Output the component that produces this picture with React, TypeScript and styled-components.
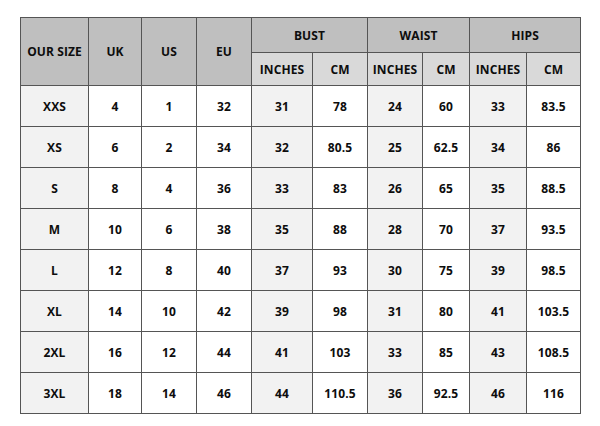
import React from 'react';
import styled, { createGlobalStyle } from 'styled-components';

const GlobalStyle = createGlobalStyle`
  html, body {
    margin: 0;
    background: #ffffff;
  }
`;

const rows: string[][] = [
  ['XXS', '4', '1', '32', '31', '78', '24', '60', '33', '83.5'],
  ['XS', '6', '2', '34', '32', '80.5', '25', '62.5', '34', '86'],
  ['S', '8', '4', '36', '33', '83', '26', '65', '35', '88.5'],
  ['M', '10', '6', '38', '35', '88', '28', '70', '37', '93.5'],
  ['L', '12', '8', '40', '37', '93', '30', '75', '39', '98.5'],
  ['XL', '14', '10', '42', '39', '98', '31', '80', '41', '103.5'],
  ['2XL', '16', '12', '44', '41', '103', '33', '85', '43', '108.5'],
  ['3XL', '18', '14', '46', '44', '110.5', '36', '92.5', '46', '116'],
];

const widths = [68, 53, 55, 55, 61, 55, 55, 47, 57, 54];
// shaded columns: size and every INCHES column
const shaded = [0, 4, 6, 8];

const App: React.FC = () => {
  return (
    <Page>
      <GlobalStyle />
      <Table>
        <colgroup>
          {widths.map((w, i) => (
            <col key={i} style={{ width: w }} />
          ))}
        </colgroup>
        <thead>
          <tr>
            <GroupHead rowSpan={2}>OUR SIZE</GroupHead>
            <GroupHead rowSpan={2}>UK</GroupHead>
            <GroupHead rowSpan={2}>US</GroupHead>
            <GroupHead rowSpan={2}>EU</GroupHead>
            <GroupHead colSpan={2} $top>BUST</GroupHead>
            <GroupHead colSpan={2} $top>WAIST</GroupHead>
            <GroupHead colSpan={2} $top>HIPS</GroupHead>
          </tr>
          <tr>
            <SubHead>INCHES</SubHead>
            <SubHead>CM</SubHead>
            <SubHead>INCHES</SubHead>
            <SubHead>CM</SubHead>
            <SubHead>INCHES</SubHead>
            <SubHead>CM</SubHead>
          </tr>
        </thead>
        <tbody>
          {rows.map((r) => (
            <tr key={r[0]}>
              {r.map((v, i) => (
                <Cell key={i} $shaded={shaded.includes(i)}>
                  {v}
                </Cell>
              ))}
            </tr>
          ))}
        </tbody>
      </Table>
    </Page>
  );
};

const Page = styled.div`
  padding: 17px 20px;
  font-family: 'Open Sans', 'Noto Sans', sans-serif;
`;

const Table = styled.table`
  border-collapse: collapse;
  table-layout: fixed;
  width: 560px;
  border: 1px solid #6f6f6f;
`;

const GroupHead = styled.th<{ $top?: boolean }>`
  height: ${(p) => (p.$top ? '34px' : '67px')};
  padding: 0;
  background: #bfbfbf;
  border: 1px solid #555555;
  color: #0d0d0d;
  font-size: 12px;
  font-weight: 700;
  letter-spacing: 0.1px;
  text-align: center;
  vertical-align: middle;
`;

const SubHead = styled.th`
  height: 32px;
  padding: 0;
  background: #d9d9d9;
  border: 1px solid #555555;
  color: #0d0d0d;
  font-size: 12px;
  font-weight: 700;
  letter-spacing: 0.1px;
  text-align: center;
`;

const Cell = styled.td<{ $shaded: boolean }>`
  height: 40px;
  padding: 0;
  background: ${(p) => (p.$shaded ? '#f2f2f2' : '#ffffff')};
  border: 1px solid #555555;
  color: #0d0d0d;
  font-size: 12px;
  font-weight: 700;
  letter-spacing: 0.1px;
  text-align: center;
`;

export default App;
